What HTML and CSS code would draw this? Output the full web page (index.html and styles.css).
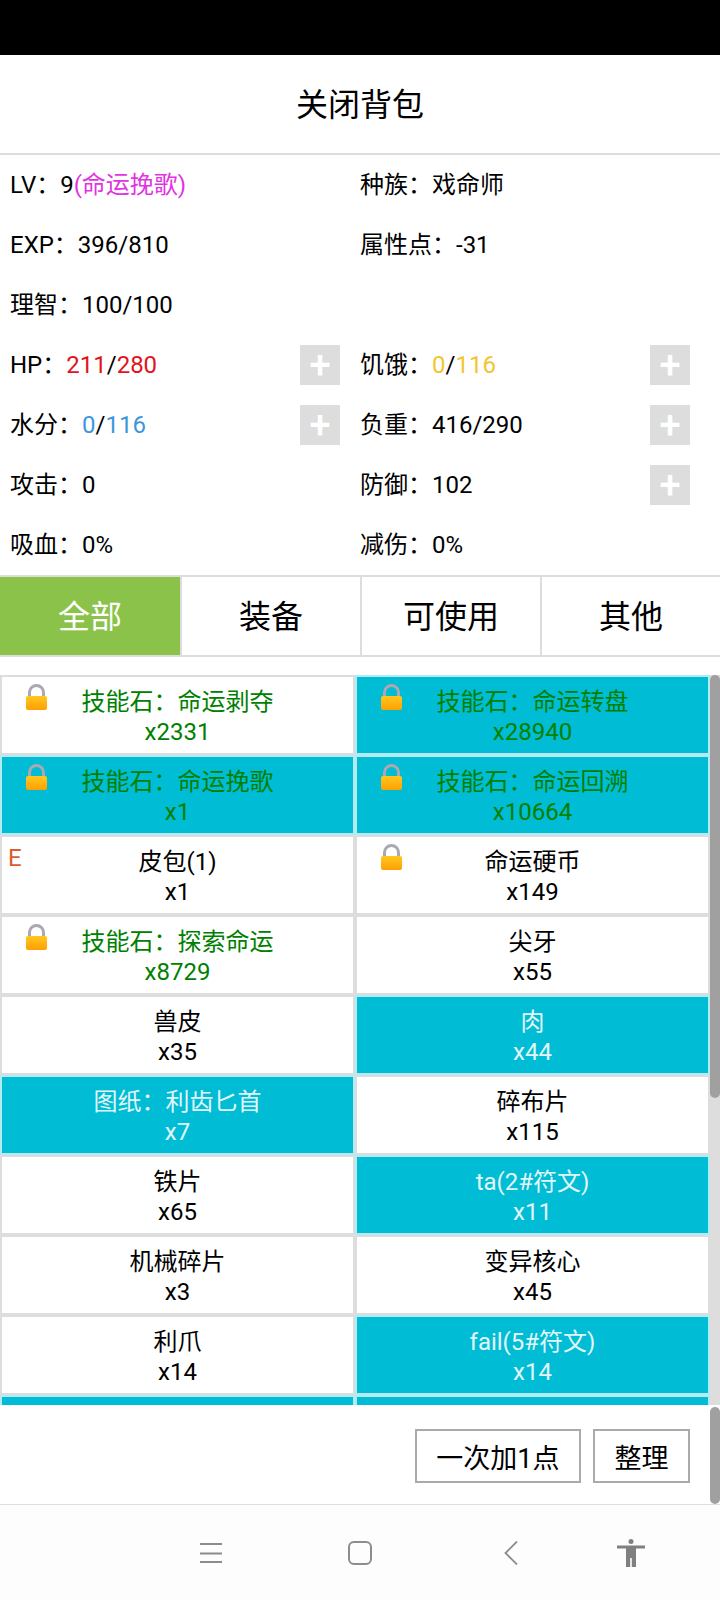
FILE: index.html
```html
<!DOCTYPE html>
<html lang="zh-CN">
<head>
<meta charset="utf-8">
<title>背包</title>
<link rel="stylesheet" href="styles.css">
</head>
<body>
<svg class="defs" aria-hidden="true">
  <defs>
    <linearGradient id="lockfill" x1="0" y1="0" x2="0" y2="1">
      <stop offset="0" stop-color="#ffc81e"/>
      <stop offset="1" stop-color="#ff9f05"/>
    </linearGradient>
    <symbol id="lock" viewBox="0 0 21 26">
      <path d="M3.500 14V8.500a7 7 0 0 1 14 0V14" fill="none" stroke="#a9a9b2" stroke-width="3"/>
      <rect x="0" y="12" width="21" height="14" rx="2" fill="url(#lockfill)"/>
    </symbol>
  </defs>
</svg>
<div class="statusbar"></div>
<header class="title">关闭背包</header>
<section class="stats">
  <div class="stat"><span>LV&#xFF1A;9<span class="magenta">(命运挽歌)</span></span></div>
  <div class="stat"><span>种族&#xFF1A;戏命师</span></div>
  <div class="stat"><span>EXP&#xFF1A;396/810</span></div>
  <div class="stat"><span>属性点&#xFF1A;-31</span></div>
  <div class="stat"><span>理智&#xFF1A;100/100</span></div>
  <div class="stat"></div>
  <div class="stat"><span>HP&#xFF1A;<span class="red">211</span>/<span class="red">280</span></span><button class="plus">+</button></div>
  <div class="stat"><span>饥饿&#xFF1A;<span class="yellow">0</span>/<span class="yellow">116</span></span><button class="plus">+</button></div>
  <div class="stat"><span>水分&#xFF1A;<span class="blue">0</span>/<span class="blue">116</span></span><button class="plus">+</button></div>
  <div class="stat"><span>负重&#xFF1A;416/290</span><button class="plus">+</button></div>
  <div class="stat"><span>攻击&#xFF1A;0</span></div>
  <div class="stat"><span>防御&#xFF1A;102</span><button class="plus">+</button></div>
  <div class="stat"><span>吸血&#xFF1A;0%</span></div>
  <div class="stat"><span>减伤&#xFF1A;0%</span></div>
</section>
<nav class="tabs">
  <div class="tab active">全部</div>
  <div class="tab">装备</div>
  <div class="tab">可使用</div>
  <div class="tab">其他</div>
</nav>
<main class="inventory">
  <div class="grid">
    <div class="cell green"><svg class="lockicon"><use href="#lock"/></svg>技能石&#xFF1A;命运剥夺<br>x2331</div>
    <div class="cell sel green"><svg class="lockicon"><use href="#lock"/></svg>技能石&#xFF1A;命运转盘<br>x28940</div>
    <div class="cell sel green"><svg class="lockicon"><use href="#lock"/></svg>技能石&#xFF1A;命运挽歌<br>x1</div>
    <div class="cell sel green"><svg class="lockicon"><use href="#lock"/></svg>技能石&#xFF1A;命运回溯<br>x10664</div>
    <div class="cell"><span class="equip">E</span>皮包(1)<br>x1</div>
    <div class="cell"><svg class="lockicon"><use href="#lock"/></svg>命运硬币<br>x149</div>
    <div class="cell green"><svg class="lockicon"><use href="#lock"/></svg>技能石&#xFF1A;探索命运<br>x8729</div>
    <div class="cell">尖牙<br>x55</div>
    <div class="cell">兽皮<br>x35</div>
    <div class="cell sel">肉<br>x44</div>
    <div class="cell sel">图纸&#xFF1A;利齿匕首<br>x7</div>
    <div class="cell">碎布片<br>x115</div>
    <div class="cell">铁片<br>x65</div>
    <div class="cell sel">ta(2#符文)<br>x11</div>
    <div class="cell">机械碎片<br>x3</div>
    <div class="cell">变异核心<br>x45</div>
    <div class="cell">利爪<br>x14</div>
    <div class="cell sel">fail(5#符文)<br>x14</div>
    <div class="cell sel"></div>
    <div class="cell sel"></div>
  </div>
  <div class="track"><div class="thumb list-thumb"></div></div>
</main>
<section class="actions">
  <button class="action">一次加1点</button>
  <button class="action">整理</button>
  <div class="thumb page-thumb"></div>
</section>
<footer class="navbar">
  <svg class="nav-menu" width="22" height="22" viewBox="0 0 22 22"><path d="M0 2h22M0 11.500h22M0 20h22" stroke="#8c8c8c" stroke-width="2" fill="none"/></svg>
  <svg class="nav-home" width="24" height="24" viewBox="0 0 24 24"><rect x="1" y="1" width="22" height="22" rx="5" fill="none" stroke="#8c8c8c" stroke-width="2"/></svg>
  <svg class="nav-back" width="14" height="24" viewBox="0 0 14 24"><path d="M13 0.500 1.500 12 13 23.500" fill="none" stroke="#8c8c8c" stroke-width="1.800"/></svg>
  <svg class="nav-person" width="28" height="28" viewBox="0 0 28 28"><circle cx="14" cy="2.500" r="2.500" fill="#808080"/><path d="M0 6.500h28v3h-9v18.500h-4.200v-9h-1.600v9H9V9.500H0z" fill="#808080"/></svg>
</footer>
</body>
</html>
```
FILE: styles.css
```css
* { box-sizing: border-box; }
html, body { margin: 0; padding: 0; }
body {
  width: 720px;
  height: 1600px;
  overflow: hidden;
  background: #fff;
  color: #000;
  font-family: Roboto, "Noto Sans CJK SC", sans-serif;
  font-size: 24px;
}
.defs { position: absolute; width: 0; height: 0; }
.statusbar { height: 55px; background: #000; }
.title {
  height: 100px;
  line-height: 100px;
  text-align: center;
  font-size: 32px;
  border-bottom: 2px solid #ddd;
}
.stats {
  display: grid;
  grid-template-columns: 350px 350px;
  grid-auto-rows: 60px;
  height: 420px;
}
.stat {
  display: flex;
  align-items: center;
  justify-content: space-between;
  padding: 0 10px;
  line-height: 30px;
}
.plus {
  width: 40px;
  height: 40px;
  padding: 0;
  border: 0;
  background: #ddd;
  color: #fff;
  font-family: Roboto, sans-serif;
  font-size: 38px;
  font-weight: 500;
  line-height: 40px;
}
.magenta { color: #e233e2; }
.red { color: #e0141e; }
.yellow { color: #f4c430; }
.blue { color: #3b97dc; }
.tabs {
  display: flex;
  height: 82px;
  border-top: 2px solid #ddd;
  border-bottom: 2px solid #ddd;
}
.tab {
  width: 180px;
  border-left: 2px solid #ddd;
  text-align: center;
  line-height: 80px;
  font-size: 32px;
}
.tab.active {
  border-left: 0;
  background: #8bc34a;
  color: #fff;
}
.inventory {
  display: flex;
  height: 730px;
  margin-top: 18px;
  overflow: hidden;
}
.grid {
  display: grid;
  grid-template-columns: 355px 355px;
  grid-auto-rows: 80px;
  width: 710px;
}
.cell {
  position: relative;
  padding-top: 10px;
  border: 2px solid #ddd;
  background: #fff;
  line-height: 30px;
  text-align: center;
}
.cell.sel {
  border-color: #b2ebf2;
  background: #00bcd4;
  color: #e0f7fa;
}
.cell.green { color: #008000; }
.lockicon {
  position: absolute;
  left: 24px;
  top: 7px;
  width: 21px;
  height: 26px;
}
.equip {
  position: absolute;
  left: 6px;
  top: 6px;
  color: #e25a2a;
  line-height: 30px;
}
.track {
  width: 10px;
  background: #ddd;
}
.thumb {
  width: 10px;
  border-radius: 5px;
  background: #a0a0a0;
}
.list-thumb { height: 423px; }
.actions {
  position: relative;
  display: flex;
  justify-content: flex-end;
  align-items: flex-start;
  gap: 12px;
  height: 99px;
  padding: 24px 30px 0 0;
}
.action {
  height: 54px;
  padding: 0 19.5px;
  border: 2px solid #aaa;
  background: #fff;
  color: #000;
  font-family: Roboto, "Noto Sans CJK SC", sans-serif;
  font-size: 27px;
}
.page-thumb {
  position: absolute;
  right: 0;
  top: 2px;
  height: 97px;
}
.navbar {
  display: flex;
  align-items: center;
  height: 96px;
  border-top: 1px solid #ddd;
  background: #fdfdfd;
}
.nav-menu { margin-left: 200px; }
.nav-home { margin-left: 126px; }
.nav-back { margin-left: 132px; }
.nav-person { margin-left: 99px; }
```
